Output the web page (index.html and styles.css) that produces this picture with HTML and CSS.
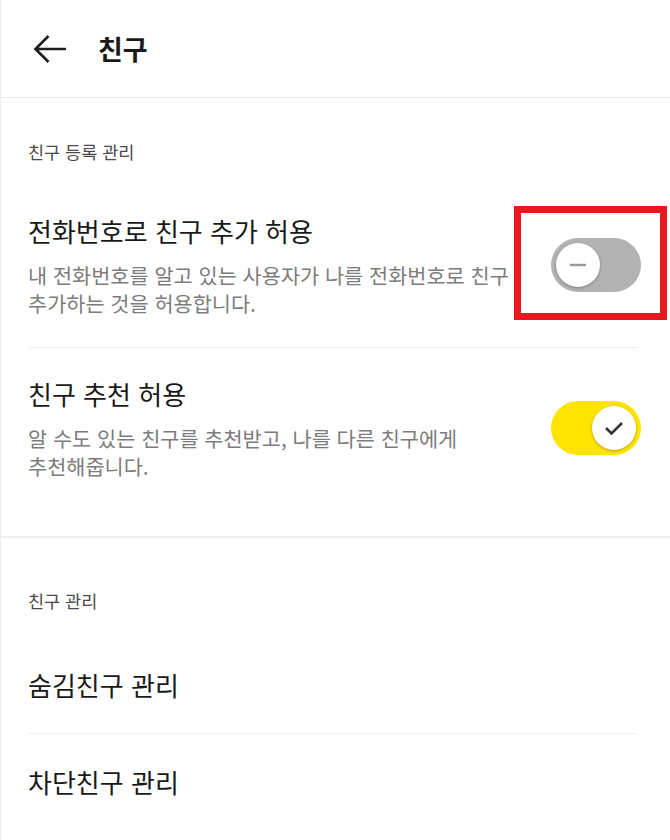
FILE: index.html
```html
<!DOCTYPE html>
<html lang="ko">
  <head>
    <meta charset="UTF-8" />
    <meta name="viewport" content="width=device-width, initial-scale=1.0" />
    <title>친구</title>
    <link rel="stylesheet" href="styles.css">
  </head>
  <body>
    <div class="container">
      <div class="header">
        <button class="back_button">
          <svg width="34" height="30" viewBox="0 0 34 30">
            <path d="M33 15H2.5M15.5 2L2.5 15L15.5 28" fill="none" stroke="#1e1e1e" stroke-width="2.6" />
          </svg>
        </button>
        <h1 class="header_title">친구</h1>
      </div>

      <div class="section">
        <div class="section_label">친구 등록 관리</div>
        <div class="setting_list">
          <div class="setting_item">
            <div class="setting_text">
              <div class="setting_title">전화번호로 친구 추가 허용</div>
              <div class="setting_desc">내 전화번호를 알고 있는 사용자가 나를 전화번호로 친구 추가하는 것을 허용합니다.</div>
            </div>
            <div class="toggle">
              <span class="toggle_knob">
                <svg width="18" height="4" viewBox="0 0 18 4">
                  <path d="M1 2H17" stroke="#9a9a9a" stroke-width="2.4" />
                </svg>
              </span>
              <span class="highlight"></span>
            </div>
          </div>
          <div class="setting_item">
            <div class="setting_text">
              <div class="setting_title">친구 추천 허용</div>
              <div class="setting_desc">알 수도 있는 친구를 추천받고, 나를 다른 친구에게 추천해줍니다.</div>
            </div>
            <div class="toggle toggle_on">
              <span class="toggle_knob">
                <svg width="20" height="16" viewBox="0 0 20 16">
                  <path d="M2 8L7.5 13.5L18 3" fill="none" stroke="#333" stroke-width="2.6" />
                </svg>
              </span>
            </div>
          </div>
        </div>
      </div>

      <div class="section section_manage">
        <div class="section_label">친구 관리</div>
        <div class="menu_list">
          <div class="menu_item">숨김친구 관리</div>
          <div class="menu_item">차단친구 관리</div>
        </div>
      </div>
    </div>
  </body>
</html>
```

FILE: styles.css
```css
body {
  margin: 0;
  background-color: #ffffff;
  font-family: "Noto Sans CJK KR", "Noto Sans", sans-serif;
  color: #191919;
  word-break: keep-all;
}

.container {
  width: 670px;
  min-height: 840px;
  border-left: 1px solid #ececec;
  box-sizing: border-box;
}

.header {
  height: 97px;
  display: flex;
  align-items: center;
  border-bottom: 1px solid #e9e9e9;
}

.back_button {
  width: 34px;
  height: 30px;
  margin-left: 32px;
  padding: 0;
  border: none;
  background: none;
  display: flex;
}

.header_title {
  margin: 0 0 0 31px;
  font-size: 27px;
  font-weight: 700;
  line-height: 36px;
  color: #191919;
}

.section {
  padding: 42px 33px 26px 27px;
  border-bottom: 2px solid #efefef;
}

.section_manage {
  padding-top: 51px;
  padding-bottom: 0;
  border-bottom: none;
}

.section_label {
  font-size: 17.5px;
  line-height: 24px;
  color: #4a4a4a;
}

.setting_item {
  display: flex;
  align-items: center;
  padding: 28px 0 30px;
  border-bottom: 1px solid #f0f0f0;
}

.setting_item:first-child {
  padding-top: 49px;
}

.setting_item:last-child {
  border-bottom: none;
}

.setting_text {
  flex: 1;
  padding-right: 30px;
}

.setting_title {
  font-size: 26px;
  line-height: 36px;
  color: #191919;
}

.setting_desc {
  margin-top: 12px;
  font-size: 20.8px;
  line-height: 28px;
  color: #7c7c7c;
}

.toggle {
  position: relative;
  flex: none;
  width: 90px;
  height: 54px;
  margin-right: -4px;
  border-radius: 27px;
  background-color: #b3b3b3;
  display: flex;
  align-items: center;
  padding: 0 5px;
  box-sizing: border-box;
}

.toggle_on {
  background-color: #fee500;
  justify-content: flex-end;
}

.toggle_knob {
  width: 44px;
  height: 44px;
  border-radius: 50%;
  background-color: #ffffff;
  box-shadow: 0 1px 3px rgba(0, 0, 0, 0.3);
  display: flex;
  align-items: center;
  justify-content: center;
}

.highlight {
  position: absolute;
  left: -37px;
  top: -32px;
  width: 153px;
  height: 114px;
  border: 7px solid #e8191e;
  box-sizing: border-box;
}

.menu_list {
  margin-top: 24px;
}

.menu_item {
  padding: 30px 0;
  font-size: 26px;
  line-height: 36px;
  color: #191919;
  border-bottom: 1px solid #f0f0f0;
}

.menu_item:last-child {
  border-bottom: none;
}
```
